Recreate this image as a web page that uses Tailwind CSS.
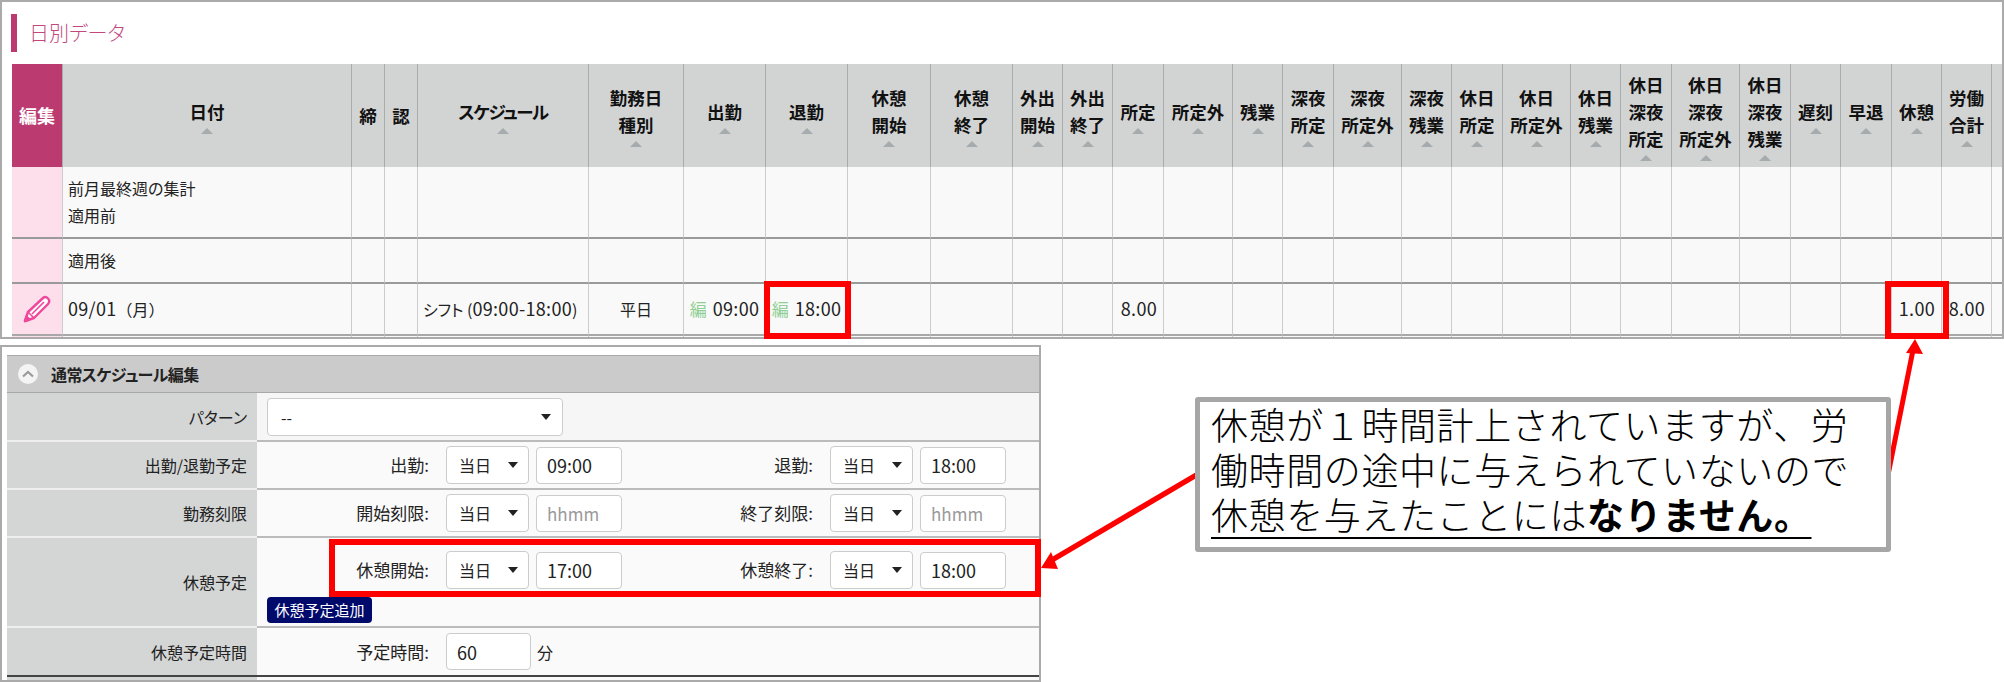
<!DOCTYPE html>
<html lang="ja">
  <head>
    <meta charset="UTF-8" />
    <title>日別データ</title>
    <script src="https://cdn.jsdelivr.net/npm/@tailwindcss/browser@4"></script>
  </head>
  <body class="relative w-[2004px] h-[682px] overflow-hidden bg-white text-[#222] text-[16px] font-['Noto_Sans_CJK_JP','Noto_Sans',sans-serif]">
    <!-- daily data -->
    <section class="h-[339px] border-2 border-[#aaa] overflow-hidden [font-feature-settings:'palt']">
      <div class="ml-[9px] mt-[12px] h-[38px] border-l-[6px] border-[#bb3b70] pl-[12px] text-[20px] leading-[38px] font-light text-[#c2477c]">日別データ</div>
      <table id="daily" class="ml-[10px] mt-[12px] w-[1990px] table-fixed border-separate border-spacing-0"></table>
    </section>

    <!-- schedule edit -->
    <section class="mt-[6px] w-[1041px] h-[337px] border-2 border-[#aaa] pl-[5px] pt-[8px] overflow-hidden [font-feature-settings:'palt']">
      <div class="h-[38px] flex items-center bg-[#cbcbcb] border-t border-b border-[#a8a8a8] pl-[11px]">
        <span class="w-[20px] h-[20px] rounded-full bg-[#f4f4f4] flex items-center justify-center">
          <svg width="12" height="8" viewBox="0 0 12 8" fill="none" stroke="#9a9a9a" stroke-width="2.2"><path d="M1 6.5 6 2l5 4.5" /></svg>
        </span>
        <span class="ml-[13px] font-bold text-[16px] tracking-[-0.6px]">通常スケジュール編集</span>
      </div>

      <div class="grid grid-cols-[250px_1fr] h-[49px]">
        <div class="flex items-center justify-end pr-[10px] bg-[#d4d6d6] border-b-2 border-[#eee]">パターン</div>
        <div class="flex items-center pl-[10px] bg-[#f6f6f6] border-b-2 border-[#bbb]">
          <div class="w-[296px] h-[38px] flex items-center justify-between pl-[13px] pr-[11px] bg-white border border-[#ccc] rounded">
            <span>--</span><i class="w-0 h-0 border-x-[5px] border-x-transparent border-t-[6px] border-t-[#222]"></i>
          </div>
        </div>
      </div>

      <div class="grid grid-cols-[250px_1fr] h-[48px]">
        <div class="flex items-center justify-end pr-[10px] bg-[#d4d6d6] border-b-2 border-[#eee]">出勤/退勤予定</div>
        <div class="flex items-center bg-[#fafafa] border-b-2 border-[#bbb]">
          <span class="w-[172px] text-right text-[17px]">出勤:</span>
          <div class="ml-[17px] w-[83px] h-[38px] flex items-center justify-between pl-[12px] pr-[10px] bg-white border border-[#ccc] rounded"><span>当日</span><i class="w-0 h-0 border-x-[5px] border-x-transparent border-t-[6px] border-t-[#222]"></i></div>
          <input class="ml-[7px] w-[86px] h-[37px] pl-[10px] bg-white border border-[#ccc] rounded text-[18px]" value="09:00" readonly />
          <span class="w-[191px] text-right text-[17px]">退勤:</span>
          <div class="ml-[17px] w-[83px] h-[38px] flex items-center justify-between pl-[12px] pr-[10px] bg-white border border-[#ccc] rounded"><span>当日</span><i class="w-0 h-0 border-x-[5px] border-x-transparent border-t-[6px] border-t-[#222]"></i></div>
          <input class="ml-[7px] w-[86px] h-[37px] pl-[10px] bg-white border border-[#ccc] rounded text-[18px]" value="18:00" readonly />
        </div>
      </div>

      <div class="grid grid-cols-[250px_1fr] h-[48px]">
        <div class="flex items-center justify-end pr-[10px] bg-[#d4d6d6] border-b-2 border-[#eee]">勤務刻限</div>
        <div class="flex items-center bg-[#fafafa] border-b-2 border-[#bbb]">
          <span class="w-[172px] text-right text-[17px]">開始刻限:</span>
          <div class="ml-[17px] w-[83px] h-[38px] flex items-center justify-between pl-[12px] pr-[10px] bg-white border border-[#ccc] rounded"><span>当日</span><i class="w-0 h-0 border-x-[5px] border-x-transparent border-t-[6px] border-t-[#222]"></i></div>
          <input class="ml-[7px] w-[86px] h-[37px] pl-[10px] bg-white border border-[#ccc] rounded text-[17px] placeholder:text-[#999]" placeholder="hhmm" readonly />
          <span class="w-[191px] text-right text-[17px]">終了刻限:</span>
          <div class="ml-[17px] w-[83px] h-[38px] flex items-center justify-between pl-[12px] pr-[10px] bg-white border border-[#ccc] rounded"><span>当日</span><i class="w-0 h-0 border-x-[5px] border-x-transparent border-t-[6px] border-t-[#222]"></i></div>
          <input class="ml-[7px] w-[86px] h-[37px] pl-[10px] bg-white border border-[#ccc] rounded text-[17px] placeholder:text-[#999]" placeholder="hhmm" readonly />
        </div>
      </div>

      <div class="grid grid-cols-[250px_1fr] h-[90px]">
        <div class="flex items-center justify-end pr-[10px] bg-[#d4d6d6] border-b-2 border-[#eee]">休憩予定</div>
        <div class="pt-[13px] bg-[#fafafa] border-b-2 border-[#bbb]">
          <div class="flex items-center">
            <span class="w-[172px] text-right text-[17px]">休憩開始:</span>
            <div class="ml-[17px] w-[83px] h-[38px] flex items-center justify-between pl-[12px] pr-[10px] bg-white border border-[#ccc] rounded"><span>当日</span><i class="w-0 h-0 border-x-[5px] border-x-transparent border-t-[6px] border-t-[#222]"></i></div>
            <input class="ml-[7px] w-[86px] h-[37px] pl-[10px] bg-white border border-[#ccc] rounded text-[18px]" value="17:00" readonly />
            <span class="w-[191px] text-right text-[17px]">休憩終了:</span>
            <div class="ml-[17px] w-[83px] h-[38px] flex items-center justify-between pl-[12px] pr-[10px] bg-white border border-[#ccc] rounded"><span>当日</span><i class="w-0 h-0 border-x-[5px] border-x-transparent border-t-[6px] border-t-[#222]"></i></div>
            <input class="ml-[7px] w-[86px] h-[37px] pl-[10px] bg-white border border-[#ccc] rounded text-[18px]" value="18:00" readonly />
          </div>
          <button class="block ml-[10px] mt-[8px] w-[105px] h-[26px] rounded bg-[#000a6b] text-white text-[15px] leading-[26px]">休憩予定追加</button>
        </div>
      </div>

      <div class="grid grid-cols-[250px_1fr] h-[47px]">
        <div class="flex items-center justify-end pr-[10px] bg-[#d4d6d6]">休憩予定時間</div>
        <div class="flex items-center bg-[#fafafa]">
          <span class="w-[172px] text-right text-[17px]">予定時間:</span>
          <input class="ml-[17px] w-[85px] h-[37px] pl-[10px] bg-white border border-[#ccc] rounded text-[18px]" value="60" readonly />
          <span class="ml-[6px]">分</span>
        </div>
      </div>
      <div class="h-[2px] bg-[#444]"></div>
      <div class="grid grid-cols-[250px_1fr] h-[4px]"><div class="bg-[#d4d6d6]"></div><div class="bg-[#fafafa]"></div></div>
    </section>

    <!-- annotations -->
    <div class="absolute left-[764px] top-[281px] w-[87px] h-[58px] border-[6px] border-[#f00]"></div>
    <div class="absolute left-[1885px] top-[281px] w-[64px] h-[58px] border-[6px] border-[#f00]"></div>
    <div class="absolute left-[329px] top-[539px] w-[712px] h-[58px] border-[6px] border-[#f00]"></div>

    <svg class="absolute left-0 top-0 pointer-events-none" width="2004" height="682" fill="#f00" stroke="#f00">
      <line x1="1888" y1="475" x2="1913" y2="350" stroke-width="5" />
      <polygon points="1915,339 1906,353 1923,354" stroke="none" />
      <line x1="1198" y1="474" x2="1052" y2="560" stroke-width="5.5" />
      <polygon points="1041,568 1051,552 1058,569" stroke="none" />
    </svg>

    <div class="absolute left-[1195px] top-[397px] w-[696px] h-[155px] border-[5px] border-[#a6a6a6] rounded-[3px] bg-white pl-[11px] text-[37px] tracking-[0.6px] leading-[45px] text-black font-light whitespace-nowrap">
      休憩が１時間計上されていますが、労<br />
      働時間の途中に与えられていないので<br />
      <span class="underline decoration-2 underline-offset-[7px]">休憩を与えたことには<b class="font-bold">なりません。</b></span>
    </div>

    <script>
      // right edges of the 29 columns, measured from the table's left side
      const edges = [0, 50, 339, 372, 405, 576, 671, 753, 835, 918, 1000, 1050, 1100, 1151, 1220, 1270, 1321, 1389, 1439, 1490, 1558, 1608, 1659, 1727, 1778, 1828, 1879, 1929, 1979, 1990];
      const heads = ["", "日付", "締", "認", '<span class="tracking-[-1.4px]">スケジュール</span>', "勤務日<br>種別", "出勤", "退勤", "休憩<br>開始", "休憩<br>終了", "外出<br>開始", "外出<br>終了", "所定", "所定外", "残業", "深夜<br>所定", "深夜<br>所定外", "深夜<br>残業", "休日<br>所定", "休日<br>所定外", "休日<br>残業", "休日<br>深夜<br>所定", "休日<br>深夜<br>所定外", "休日<br>深夜<br>残業", "遅刻", "早退", "休憩", "労働<br>合計", ""];
      const noSort = [0, 2, 3, 28];

      const pencil = '<svg class="mx-auto" width="28" height="28" viewBox="0 0 28 28" fill="#fff" stroke="#f0479b" stroke-width="2.4" stroke-linejoin="round"><path d="M2 26 5 17 20 3Q22.500 1 25 3.500T25 9L11 23Z"/><path d="M5 17 11 23M9 19 21 7" stroke-width="1.600"/><path d="M2 26 3.500 21.500 6.500 24.500Z" fill="#f0479b"/></svg>';
      const edit = '<span class="text-[#8fcf94] text-[17px] mr-[6px]">編</span>';
      const num = (t) => '<span class="text-[18px] tracking-[0.3px]">' + t + "</span>";

      const bodyRows = [
        { h: "h-[72px]", line: "border-b-2 border-b-[#9a9a9a]", cells: { 1: "前月最終週の集計<br>適用前" } },
        { h: "h-[45px]", line: "border-b-2 border-b-[#9a9a9a]", cells: { 1: "適用後" } },
        {
          h: "h-[52px]",
          line: "border-b-2 border-b-[#a8a8a8]",
          cells: {
            0: pencil,
            1: num("09/01") + '<span class="[font-feature-settings:normal]">（月）</span>',
            4: "シフト (" + num("09:00-18:00") + ")",
            5: "平日",
            6: edit + num("09:00"),
            7: edit + num("18:00"),
            12: num("8.00"),
            26: num("1.00"),
            27: num("8.00"),
          },
        },
        { h: "h-[2px]", line: "", cells: {} },
      ];

      const align = { 1: "text-left pl-[5px]", 4: "text-left pl-[5px]", 5: "text-center", 6: "text-center", 7: "text-center", 12: "text-right pr-[6px]", 26: "text-right pr-[6px]", 27: "text-right pr-[6px]" };

      let html = "<colgroup>";
      heads.forEach((_, i) => {
        html += '<col style="width:' + (edges[i + 1] - edges[i]) + 'px">';
      });
      html += '</colgroup><thead><tr class="h-[103px]">';
      heads.forEach((label, i) => {
        if (i === 0) {
          html += '<th class="bg-[#bb3b70] text-white text-[18px] font-bold">編集</th>';
          return;
        }
        const sort = noSort.includes(i) ? "" : '<i class="block mx-auto mt-[3px] w-0 h-0 border-x-[6px] border-x-transparent border-b-[6px] border-b-[#a6abae]"></i>';
        html += '<th class="bg-[#d2d4d4] border-l border-l-[#a9acac] text-[17.5px] leading-[27px] font-bold whitespace-nowrap text-[#111]">' + label + sort + "</th>";
      });
      html += "</tr></thead><tbody>";
      bodyRows.forEach((row) => {
        html += '<tr class="' + row.h + '">';
        heads.forEach((_, i) => {
          const content = row.cells[i] || "";
          const bg = i === 0 ? "bg-[#fddfeb]" : "bg-[#f9f9f9] border-l border-l-[#ccc]";
          html += '<td class="' + bg + " " + row.line + " " + (align[i] || "") + ' p-0 leading-[27px] whitespace-nowrap overflow-hidden">' + content + "</td>";
        });
        html += "</tr>";
      });
      html += "</tbody>";
      document.getElementById("daily").innerHTML = html;
    </script>
  </body>
</html>
